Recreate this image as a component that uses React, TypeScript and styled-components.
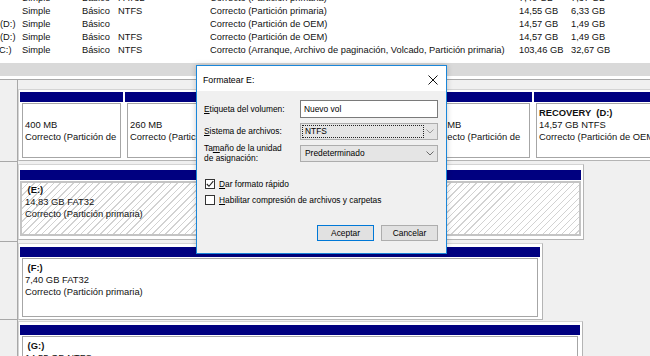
import React, { FC } from 'react'
import styled, { createGlobalStyle } from 'styled-components'

type VolumeRow = {
  name?: string
  shift?: number
  fs: string
  status: string
  size: string
  free: string
}

type Part = {
  width: number
  name?: string
  size?: string
  status: string
  selected?: boolean
}

type Disk = {
  height: number
  top: number
  pad: number
  width: number
  frameHeight: number
  parts: Part[]
}

const volumes: VolumeRow[] = [
  { fs: 'FAT32', status: 'Correcto (Partición primaria)', size: '7,40 GB', free: '7,37 GB' },
  { fs: 'NTFS', status: 'Correcto (Partición primaria)', size: '14,55 GB', free: '6,33 GB' },
  { name: '(D:)', fs: '', status: 'Correcto (Partición de OEM)', size: '14,57 GB', free: '1,49 GB' },
  { name: '(D:)', fs: 'NTFS', status: 'Correcto (Partición de OEM)', size: '14,57 GB', free: '1,49 GB' },
  {
    name: '(C:)',
    shift: 4,
    fs: 'NTFS',
    status: 'Correcto (Arranque, Archivo de paginación, Volcado, Partición primaria)',
    size: '103,46 GB',
    free: '32,67 GB',
  },
]

const disks: Disk[] = [
  {
    height: 82,
    top: 9,
    pad: 2,
    width: 700,
    frameHeight: 72,
    parts: [
      { width: 103, size: '400 MB', status: 'Correcto (Partición de' },
      { width: 103, size: '260 MB', status: 'Correcto (Partición de' },
      { width: 192, name: 'Windows  (C:)', size: '103,46 GB NTFS', status: 'Correcto (Arranque, Archivo de' },
      { width: 108, size: '450 MB', status: 'Correcto (Partición de' },
      { width: 200, name: 'RECOVERY  (D:)', size: '14,57 GB NTFS', status: 'Correcto (Partición de OEM)' },
    ],
  },
  {
    height: 80,
    top: 2,
    pad: 5,
    width: 566,
    frameHeight: 76,
    parts: [
      { width: 561, name: ' (E:)', size: '14,83 GB FAT32', status: 'Correcto (Partición primaria)', selected: true },
    ],
  },
  {
    height: 78,
    top: 1,
    pad: 3,
    width: 525,
    frameHeight: 77,
    parts: [{ width: 520, name: ' (F:)', size: '7,40 GB FAT32', status: 'Correcto (Partición primaria)' }],
  },
  {
    height: 80,
    top: 1,
    pad: 3,
    width: 565,
    frameHeight: 77,
    parts: [{ width: 560, name: ' (G:)', size: '14,55 GB NTFS', status: 'Correcto (Partición primaria)' }],
  },
]

const Chevron: FC<{ color: string }> = ({ color }) => (
  <svg width="8" height="5" viewBox="0 0 8 5">
    <polyline points="0.5,0.5 4,4 7.5,0.5" fill="none" stroke={color} strokeWidth="1" />
  </svg>
)

const App: FC = () => {
  return (
    <>
      <GlobalStyle />
      <Screen>
        <VolumeList>
          <ListBody>
            {volumes.map((v, i) => (
              <ListRow key={i}>
                <NameCell>
                  <NameText $shift={v.shift ?? 0}>{v.name ?? ''}</NameText>
                </NameCell>
                <Cell>Simple</Cell>
                <Cell>Básico</Cell>
                <Cell>{v.fs}</Cell>
                <Cell>{v.status}</Cell>
                <Cell>{v.size}</Cell>
                <Cell>{v.free}</Cell>
              </ListRow>
            ))}
          </ListBody>
        </VolumeList>
        <Splitter />
        <Pane>
          {disks.map((d, i) => (
            <DiskRow key={i} $height={d.height}>
              <DiskLabel />
              <Frame $top={d.top} $pad={d.pad} $width={d.width} $height={d.frameHeight}>
                {d.parts.map((p, j) => (
                  <Partition key={j} $width={p.width}>
                    <Bar />
                    <PartBody $selected={!!p.selected}>
                      <PartName>{p.name ?? ' '}</PartName>
                      <PartLine>{p.size}</PartLine>
                      <PartLine>{p.status}</PartLine>
                    </PartBody>
                  </Partition>
                ))}
              </Frame>
            </DiskRow>
          ))}
        </Pane>

        <Dialog>
          <TitleBar>
            <span>Formatear E:</span>
            <svg width="10" height="10" viewBox="0 0 10 10">
              <path d="M0.5 0.5 L9.5 9.5 M9.5 0.5 L0.5 9.5" stroke="#111" strokeWidth="1" fill="none" />
            </svg>
          </TitleBar>
          <Form>
            <FieldRow $height={18}>
              <FieldLabel>
                <u>E</u>tiqueta del volumen:
              </FieldLabel>
              <TextInput>Nuevo vol</TextInput>
            </FieldRow>
            <FieldRow $height={18} $gap={4}>
              <FieldLabel>
                <u>S</u>istema de archivos:
              </FieldLabel>
              <Select>
                <SelectValue $focused>NTFS</SelectValue>
                <Chevron color="#9a9a9a" />
              </Select>
            </FieldRow>
            <FieldRow $height={22} $gap={2}>
              <FieldLabel>
                Ta<u>m</u>año de la unidad
                <br />
                de asignación:
              </FieldLabel>
              <Select>
                <SelectValue>Predeterminado</SelectValue>
                <Chevron color="#6a6a6a" />
              </Select>
            </FieldRow>
            <Checks>
              <CheckRow>
                <CheckBox>
                  <svg width="8" height="8" viewBox="0 0 8 8">
                    <polyline points="0.8,4 3,6.3 7.3,1.2" fill="none" stroke="#222" strokeWidth="1.1" />
                  </svg>
                </CheckBox>
                <span>
                  <u>D</u>ar formato rápido
                </span>
              </CheckRow>
              <CheckRow>
                <CheckBox />
                <span>
                  <u>H</u>abilitar compresión de archivos y carpetas
                </span>
              </CheckRow>
            </Checks>
            <Buttons>
              <Button $primary>Aceptar</Button>
              <Button>Cancelar</Button>
            </Buttons>
          </Form>
        </Dialog>
      </Screen>
    </>
  )
}

export default App

const GlobalStyle = createGlobalStyle`
  html, body {
    margin: 0;
    padding: 0;
    background: #fff;
  }
  body {
    font-family: 'Liberation Sans', Arial, sans-serif;
    color: #000;
  }
`

const Screen = styled.div`
  position: relative;
  width: 650px;
  height: 356px;
  overflow: hidden;
  background: #fff;
  display: flex;
  flex-direction: column;
`

const VolumeList = styled.div`
  height: 63px;
  flex-shrink: 0;
  overflow: hidden;
  font-size: 9.3px;
  color: #111;
`

const ListBody = styled.div`
  margin-top: -8px;
`

const ListRow = styled.div`
  display: grid;
  grid-template-columns: 22px 60px 36px 92px 309px 52px 1fr;
  height: 13px;
  line-height: 13px;
  white-space: nowrap;
`

const Cell = styled.span`
  overflow: hidden;
`

const NameCell = styled.span`
  overflow: hidden;
`

const NameText = styled.span<{ $shift: number }>`
  display: inline-block;
  margin-left: ${(p) => -p.$shift}px;
`

const Splitter = styled.div`
  height: 13px;
  flex-shrink: 0;
  background: #d9d9d9;
`

const Pane = styled.div`
  flex: 1;
  margin-top: 3px;
  border-top: 1px solid #a8a8a8;
  background: #f0f0f0;
  overflow: hidden;
`

const DiskRow = styled.div<{ $height: number }>`
  display: flex;
  align-items: flex-start;
  height: ${(p) => p.$height}px;
`

const DiskLabel = styled.div`
  width: 18px;
  height: 100%;
  flex-shrink: 0;
  box-sizing: border-box;
  border-right: 1px solid #a8a8a8;
  border-bottom: 1px solid #a8a8a8;
`

const Frame = styled.div<{ $top: number; $pad: number; $width: number; $height: number }>`
  display: flex;
  gap: 2px;
  flex-shrink: 0;
  box-sizing: border-box;
  margin-top: ${(p) => p.$top}px;
  width: ${(p) => p.$width}px;
  height: ${(p) => p.$height}px;
  padding: ${(p) => p.$pad}px 2px 1px 1px;
  background: #fff;
  border: 1px solid #d4d4d4;
  border-right-color: #b4b4b4;
  border-bottom-color: #b4b4b4;
`

const Partition = styled.div<{ $width: number }>`
  display: flex;
  flex-direction: column;
  flex-shrink: 0;
  width: ${(p) => p.$width}px;
`

const Bar = styled.div`
  height: 10px;
  flex-shrink: 0;
  background: #000080;
`

const PartBody = styled.div<{ $selected: boolean }>`
  flex: 1;
  overflow: hidden;
  margin: ${(p) => (p.$selected ? '1px 0 2px 0' : '1px 2px 1px 2px')};
  padding: ${(p) => (p.$selected ? '1px 3px' : '3px 2px')};
  border: ${(p) => (p.$selected ? '2px solid #c4c4c4' : '1px solid #a6a6a6')};
  background-color: #fff;
  background-image: ${(p) =>
    p.$selected
      ? 'repeating-linear-gradient(135deg, transparent 0 3.6px, #d2d2d2 3.6px 4.6px)'
      : 'none'};
  font-size: 9.4px;
  line-height: 12px;
  white-space: nowrap;
  color: #111;
`

const PartName = styled.div`
  font-weight: bold;
  white-space: pre;
`

const PartLine = styled.div``

const Dialog = styled.div`
  position: absolute;
  left: 196px;
  top: 65px;
  width: 251px;
  height: 189px;
  box-sizing: border-box;
  border: 1px solid #1a86d9;
  background: #f0f0f0;
  box-shadow: 0 0 6px rgba(0, 0, 0, 0.2);
  display: flex;
  flex-direction: column;
  font-size: 8.4px;
  color: #000;
`

const TitleBar = styled.div`
  height: 25px;
  flex-shrink: 0;
  box-sizing: border-box;
  padding: 2px 8px 0 6px;
  background: #fff;
  display: flex;
  align-items: center;
  justify-content: space-between;
  font-size: 8.8px;
`

const Form = styled.div`
  flex: 1;
  padding: 9px 8px 0 7px;
  display: flex;
  flex-direction: column;
`

const FieldRow = styled.div<{ $height: number; $gap?: number }>`
  display: grid;
  grid-template-columns: 96px 138px;
  align-items: center;
  height: ${(p) => p.$height}px;
  margin-top: ${(p) => p.$gap ?? 0}px;
`

const FieldLabel = styled.div`
  line-height: 10.5px;

  u {
    text-decoration-thickness: 1px;
    text-underline-offset: 1px;
  }
`

const TextInput = styled.div`
  height: 18px;
  box-sizing: border-box;
  border: 1px solid #7a7a7a;
  background: #fff;
  padding: 0 3px;
  line-height: 16px;
`

const Select = styled.div`
  height: 17px;
  box-sizing: border-box;
  border: 1px solid #adadad;
  background: #e5e5e5;
  display: flex;
  align-items: center;
  gap: 2px;
  padding: 0 3px 0 1px;
`

const SelectValue = styled.div<{ $focused?: boolean }>`
  flex: 1;
  height: 13px;
  box-sizing: border-box;
  line-height: 11px;
  padding-left: 2px;
  border: 1px dotted ${(p) => (p.$focused ? '#222' : 'transparent')};
`

const Checks = styled.div`
  margin-top: 12px;
  display: flex;
  flex-direction: column;
`

const CheckRow = styled.div`
  height: 16px;
  display: flex;
  align-items: center;
  gap: 4px;
  padding-left: 1px;
`

const CheckBox = styled.span`
  width: 10px;
  height: 10px;
  box-sizing: border-box;
  border: 1px solid #333;
  background: #fff;
  display: flex;
  align-items: center;
  justify-content: center;
`

const Buttons = styled.div`
  margin-top: 17px;
  display: flex;
  justify-content: flex-end;
  gap: 7px;
`

const Button = styled.div<{ $primary?: boolean }>`
  width: 57px;
  height: 16px;
  box-sizing: border-box;
  border: 1px solid ${(p) => (p.$primary ? '#0078d7' : '#adadad')};
  background: #e1e1e1;
  display: flex;
  align-items: center;
  justify-content: center;
`
